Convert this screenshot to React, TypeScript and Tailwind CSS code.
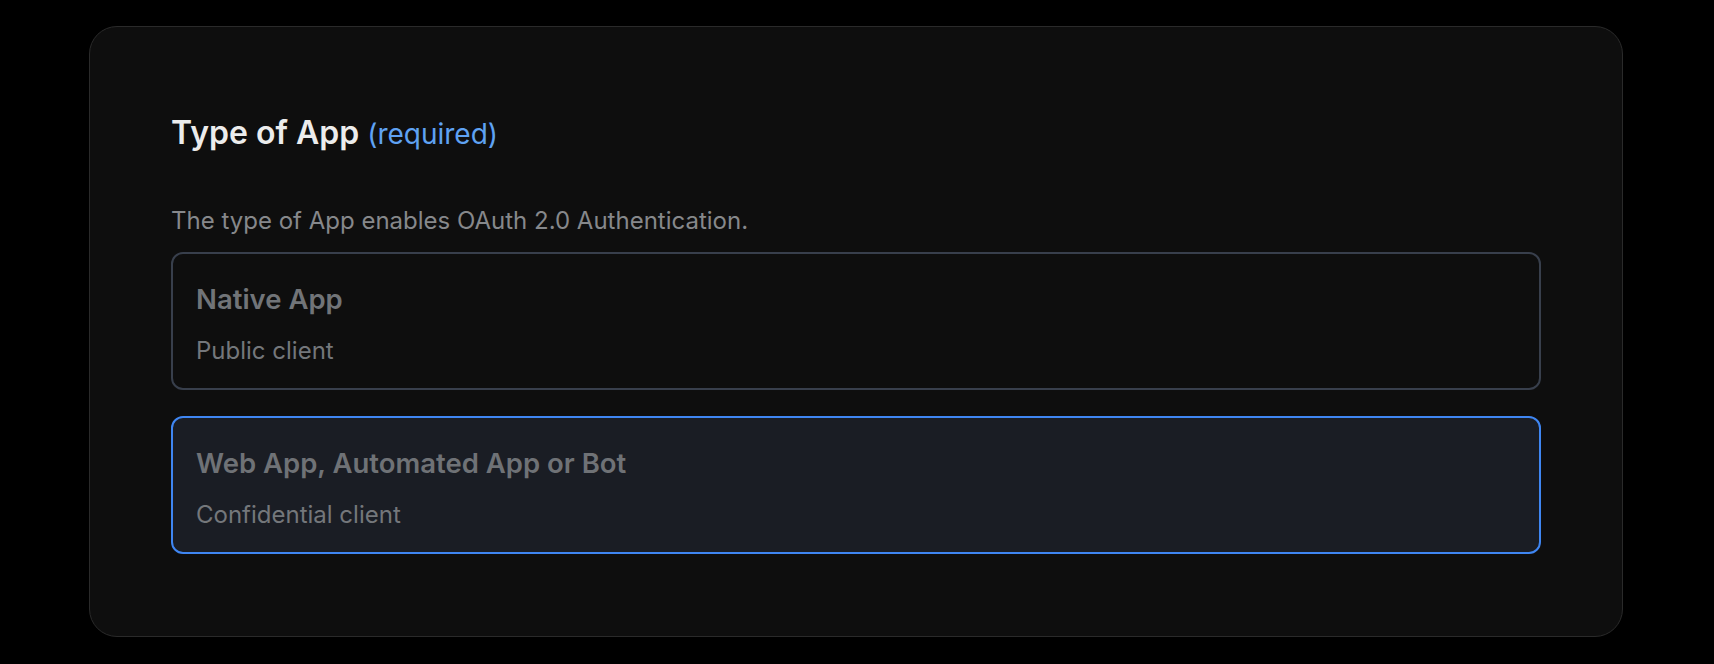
import React from "react";

export default function App() {
  return (
    <div className="min-h-[664px] w-full bg-black pt-[26px] pb-[27px]" style={{ fontFamily: "Inter, 'Noto Sans', sans-serif" }}>
      <div className="ml-[89px] w-[1534px] h-[611px] rounded-[28px] border border-[#2a2a2a] bg-[#0e0e0e] px-[81px] pt-[86px]">
        <h2 className="text-[32px] leading-[40px] font-semibold text-[#ececec]">
          Type of App <span className="text-[28px] font-normal text-[#5fa2f3]">(required)</span>
        </h2>
        <p className="mt-[51px] text-[24px] leading-[32px] text-[#86888b]">
          The type of App enables OAuth 2.0 Authentication.
        </p>
        <div className="mt-[15px] flex flex-col gap-[26px]">
          <div className="h-[138px] rounded-[12px] border-2 border-[#383f4c] bg-[#0e0e0e] px-[23px] pt-[27.5px]">
            <div className="text-[27.5px] leading-[34px] font-semibold text-[#717478]">Native App</div>
            <div className="mt-[19px] text-[24px] leading-[32px] text-[#74777b]">Public client</div>
          </div>
          <div className="h-[138px] rounded-[12px] border-2 border-[#3f86f2] bg-[#1a1d24] px-[23px] pt-[27.5px]">
            <div className="text-[27.5px] leading-[34px] font-semibold text-[#6f7276]">Web App, Automated App or Bot</div>
            <div className="mt-[19px] text-[24px] leading-[32px] text-[#74777b]">Confidential client</div>
          </div>
        </div>
      </div>
    </div>
  );
}
